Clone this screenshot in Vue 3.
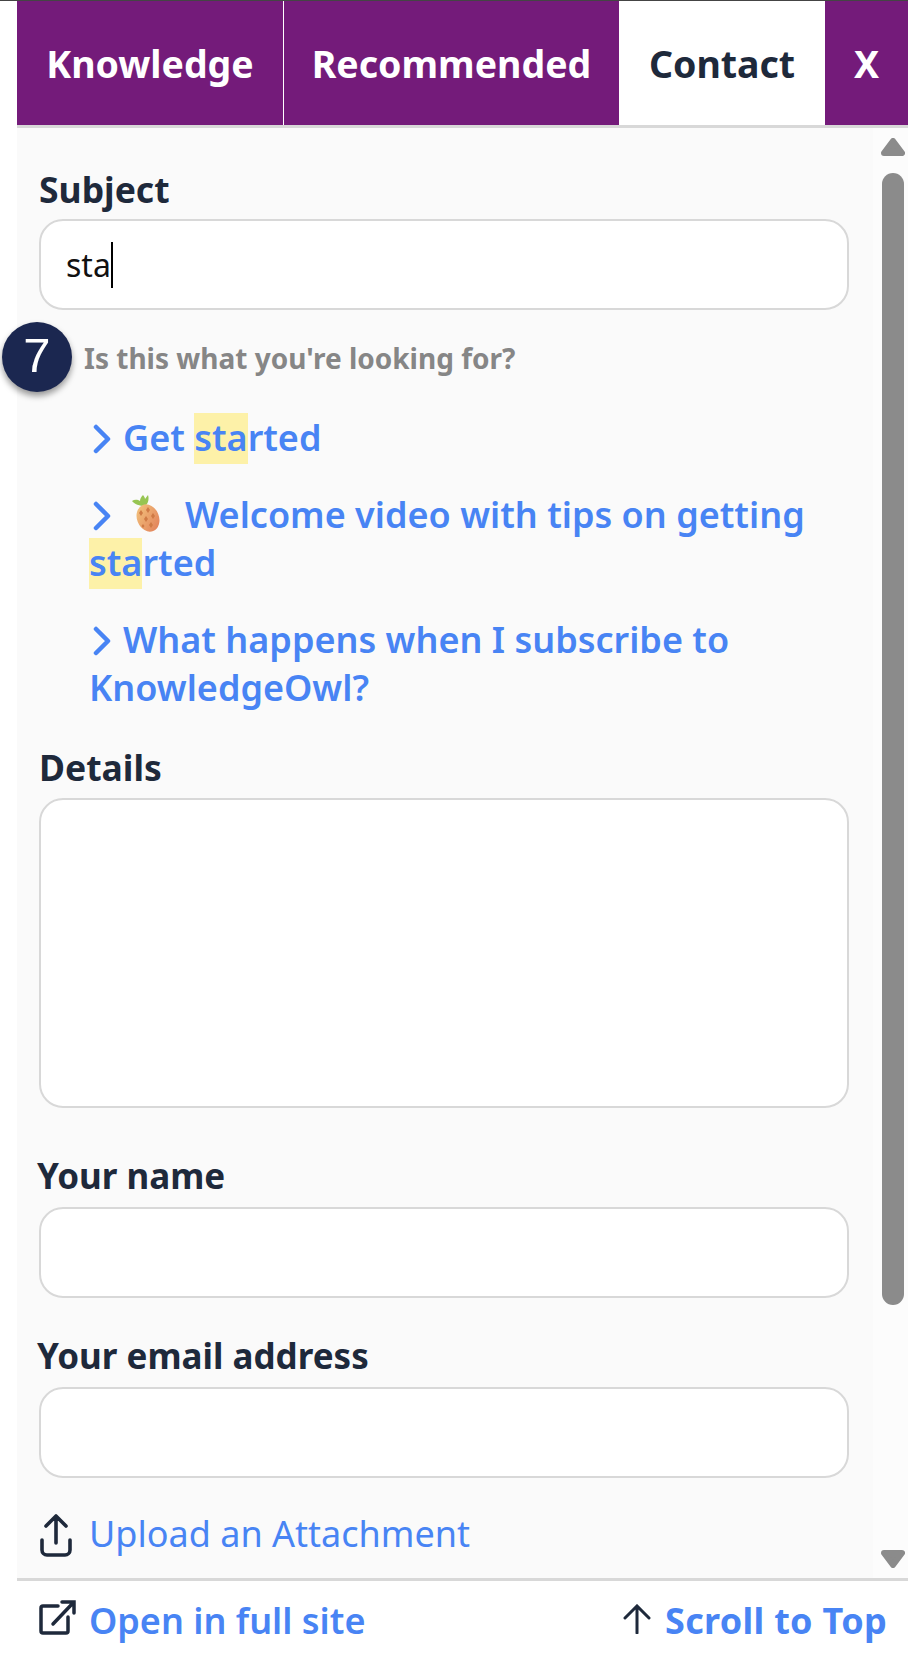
<template>
  <div class="widget">
    <div class="tabs">
      <div class="tab tab-knowledge">Knowledge</div>
      <div class="tab tab-recommended">Recommended</div>
      <div class="tab tab-contact">Contact</div>
      <div class="tab tab-close">X</div>
    </div>

    <div class="panel">
      <div class="form">
        <label class="label first">Subject</label>
        <div class="input">
          <span class="typed">sta</span>
        </div>

        <div class="suggest">
          <p class="suggest-title">Is this what you're looking for?</p>
          <span class="step-badge">7</span>
          <ul class="suggest-list">
            <li v-for="item in suggestions" :key="item.id">
              <svg class="chevron" viewBox="0 0 20 30" fill="none">
                <path d="M3 3l12 12-12 12" stroke="currentColor" stroke-width="4.5" stroke-linecap="round" stroke-linejoin="round" />
              </svg>
              <svg v-if="item.emoji" class="pineapple" viewBox="0 0 28 37">
                <defs>
                  <linearGradient id="pine" x1="0.2" y1="0" x2="0.8" y2="1">
                    <stop offset="0" stop-color="#f2c27c" />
                    <stop offset="1" stop-color="#e2815a" />
                  </linearGradient>
                </defs>
                <path d="M13 11C8 11 2 9 0 6c3-2 6-1 8 0 0-2 1-4 3-6 1 1 2 3 2 4 1-1 2-3 3-4 1 3 1 8-3 11z" fill="#97c552" />
                <ellipse cx="16" cy="23" rx="11" ry="14" transform="rotate(-22 16 23)" fill="url(#pine)" />
                <path d="M9 15l2 3-2 3-2-3zM16 12l2 3-2 3-2-3zM14 21l2 3-2 3-2-3zM21 18l2 3-2 3-2-3zM19 27l2 3-2 3-2-3zM11 29l1.500 2-1.500 2-1.500-2z" fill="#cf7a45" />
              </svg>
              <template v-for="(part, i) in item.parts" :key="i">
                <mark v-if="part.hit">{{ part.text }}</mark>
                <span v-else>{{ part.text }}</span>
              </template>
            </li>
          </ul>
        </div>

        <label class="label details">Details</label>
        <div class="textarea"></div>

        <label class="label name">Your name</label>
        <div class="input"></div>

        <label class="label email">Your email address</label>
        <div class="input"></div>

        <div class="upload">
          <svg class="upload-icon" viewBox="0 0 34 44" fill="none">
            <path d="M17 30V3M7 13L17 3l10 10M3 27v10a5 5 0 005 5h18a5 5 0 005-5V27" stroke="#1e293b" stroke-width="3.600" stroke-linecap="round" stroke-linejoin="round" />
          </svg>
          <span>Upload an Attachment</span>
        </div>
      </div>

      <div class="scrollbar">
        <svg class="arrow" viewBox="0 0 24 18"><path d="M12 3L21 15H3z" fill="#8b8b8b" stroke="#8b8b8b" stroke-width="6" stroke-linejoin="round" /></svg>
        <div class="thumb"></div>
        <svg class="arrow arrow-down" viewBox="0 0 24 18"><path d="M12 15L21 3H3z" fill="#8b8b8b" stroke="#8b8b8b" stroke-width="6" stroke-linejoin="round" /></svg>
      </div>
    </div>

    <div class="footer">
      <div class="foot-link foot-open">
        <svg class="foot-icon" viewBox="0 0 38 36" fill="none">
          <path d="M30 18v14a2 2 0 01-2 2H5a2 2 0 01-2-2V9a2 2 0 012-2h15" stroke="#1e293b" stroke-width="3.500" stroke-linecap="round" stroke-linejoin="round" />
          <path d="M15 25L35 4M24 3h12v11" stroke="#1e293b" stroke-width="3.500" stroke-linecap="round" />
        </svg>
        <span>Open in full site</span>
      </div>
      <div class="foot-link foot-top">
        <svg class="foot-icon-up" viewBox="0 0 30 30" fill="none">
          <path d="M15 29V3M3 14L15 2l12 12" stroke="#1e293b" stroke-width="3" stroke-linecap="round" />
        </svg>
        <span>Scroll to Top</span>
      </div>
    </div>
  </div>
</template>

<script setup>
const suggestions = [
  { id: 1, parts: [{ text: 'Get ' }, { text: 'sta', hit: true }, { text: 'rted' }] },
  { id: 2, emoji: true, parts: [{ text: 'Welcome video with tips on getting ' }, { text: 'sta', hit: true }, { text: 'rted' }] },
  { id: 3, parts: [{ text: 'What happens when I subscribe to KnowledgeOwl?' }] }
];
</script>

<style>
html, body {
  margin: 0;
  background: #fff;
}
</style>

<style scoped>
.widget {
  width: 908px;
  height: 1660px;
  box-sizing: border-box;
  padding-left: 17px;
  border-top: 1px solid #444;
  display: flex;
  flex-direction: column;
  font-family: "Noto Sans", "Liberation Sans", sans-serif;
  color: #1e293b;
  overflow: hidden;
}

.tabs {
  display: flex;
  height: 124px;
  flex-shrink: 0;
  background: #741b7a;
  font-size: 37.500px;
  font-weight: 700;
  color: #fff;
}

.tab {
  display: flex;
  align-items: center;
  justify-content: center;
  box-sizing: border-box;
}

.tab-knowledge {
  width: 267px;
  border-right: 1px solid #fff;
}

.tab-recommended {
  width: 335px;
}

.tab-contact {
  width: 206px;
  background: #fff;
  color: #1e293b;
}

.tab-close {
  width: 83px;
}

.panel {
  flex: 1;
  min-height: 0;
  display: flex;
  background: #fafafa;
  border-top: 3px solid #d8d8d8;
  border-bottom: 3px solid #d8d8d8;
}

.form {
  width: 856px;
  box-sizing: border-box;
  padding: 0 24px 0 22px;
}

.label {
  display: block;
  font-size: 35.500px;
  font-weight: 700;
  line-height: 44px;
  margin-bottom: 8px;
}

.label.first {
  margin-top: 39px;
}

.input {
  height: 91px;
  box-sizing: border-box;
  background: #fff;
  border: 2px solid #d8d8d8;
  border-radius: 24px;
  padding-left: 25px;
  display: flex;
  align-items: center;
  font-size: 32px;
  color: #111;
}

.typed {
  border-right: 2px solid #000;
  line-height: 46px;
}

.suggest {
  position: relative;
  padding: 0 0 0 50px;
}

.suggest-title {
  margin: 28px 0 0 -5px;
  font-size: 28px;
  font-weight: 700;
  line-height: 40px;
  color: #868686;
}

.step-badge {
  position: absolute;
  left: -37px;
  top: -16px;
  width: 70px;
  height: 70px;
  border-radius: 50%;
  background: #1b2750;
  box-shadow: 0 4px 6px rgba(0, 0, 0, 0.4);
  color: #fff;
  font-family: "Liberation Sans", Arial, sans-serif;
  font-size: 49px;
  line-height: 66px;
  text-align: center;
}

.suggest-list {
  list-style: none;
  margin: 36px 0 0 0;
  padding: 0 28px 0 0;
  font-size: 36px;
  font-weight: 600;
  line-height: 48px;
  color: #4884f4;
}

.suggest-list li {
  margin-bottom: 29px;
}

.suggest-list mark {
  background: #fdf1a8;
  color: inherit;
  padding: 0 0 2px;
}

.chevron {
  width: 20px;
  height: 30px;
  margin: 0 10px 0 4px;
  vertical-align: -3px;
  color: #4884f4;
}

.pineapple {
  width: 28px;
  height: 37px;
  margin: 0 25px 0 9px;
  vertical-align: -4px;
}

.label.details {
  margin-top: 33px;
  margin-bottom: 9px;
}

.textarea {
  height: 310px;
  box-sizing: border-box;
  background: #fff;
  border: 2px solid #d8d8d8;
  border-radius: 24px;
}

.label.name {
  font-size: 35px;
  margin-top: 46px;
  margin-bottom: 9px;
  margin-left: -2px;
}

.label.email {
  font-size: 35px;
  margin-top: 36px;
  margin-bottom: 9px;
  margin-left: -2px;
}

.upload {
  display: flex;
  align-items: center;
  gap: 16px;
  margin-top: 31px;
  font-size: 36px;
  color: #4884f4;
}

.upload-icon {
  width: 34px;
  height: 44px;
  margin-top: 2px;
}

.scrollbar {
  flex: 1;
  display: flex;
  flex-direction: column;
  align-items: center;
  padding: 10px 0 10px 5px;
  background: #fcfcfc;
}

.arrow {
  width: 24px;
  height: 18px;
  flex-shrink: 0;
}

.thumb {
  width: 22px;
  height: 1132px;
  margin-top: 17px;
  border-radius: 11px;
  background: #8b8b8b;
}

.arrow-down {
  margin-top: auto;
}

.footer {
  height: 79px;
  flex-shrink: 0;
  display: flex;
  justify-content: space-between;
  align-items: center;
  padding: 0 21px;
  font-size: 36px;
  color: #4884f4;
}

.foot-link {
  display: flex;
  align-items: center;
  gap: 13px;
}

.foot-open {
  font-weight: 650;
}

.foot-top {
  font-weight: 700;
  letter-spacing: 0.3px;
}

.foot-icon {
  width: 38px;
  height: 36px;
  margin-bottom: 8px;
}

.foot-icon-up {
  width: 30px;
  height: 30px;
  margin-bottom: 4px;
}
</style>
